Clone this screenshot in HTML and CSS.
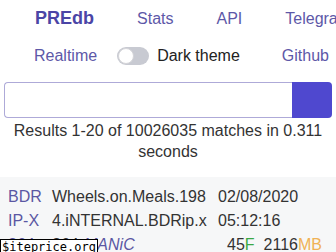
FILE: index.html
```html
<!DOCTYPE html>
<html lang="en">
<head>
<meta charset="utf-8">
<title>PREdb</title>
<link rel="stylesheet" href="styles.css">
</head>
<body>
<nav class="nav">
  <div class="nav-row nav-row-top">
    <a class="brand" href="#">PREdb</a>
    <a class="nav-link" href="#">Stats</a>
    <a class="nav-link" href="#">API</a>
    <a class="nav-link" href="#">Telegram</a>
  </div>
  <div class="nav-row nav-row-bottom">
    <a class="nav-link" href="#">Realtime</a>
    <label class="theme-switch">
      <span class="switch"><span class="knob"></span></span>
      <span class="switch-label">Dark theme</span>
    </label>
    <a class="nav-link github" href="#">Github</a>
  </div>
</nav>

<form class="search">
  <input class="search-input" type="text" aria-label="Search">
  <button class="search-btn" type="button" aria-label="Search"></button>
</form>

<p class="results">Results 1-20 of 10026035 matches in 0.311 seconds</p>

<div class="table">
  <div class="row">
    <a class="cat" href="#">BDRIP-X264</a>
    <div class="name">Wheels.on.Meals.1984.iNTERNAL.BDRip.x264<a class="group" href="#">-MANiC</a></div>
    <div class="meta">
      <div class="date">02/08/2020 05:12:16</div>
      <div class="size"><span>45<span class="files">F</span></span><span class="mbsize">2116<span class="mb">MB</span></span></div>
    </div>
  </div>
</div>

<div class="watermark">$iteprice.org</div>
</body>
</html>
```

FILE: styles.css
```css
html, body {
  margin: 0;
  padding: 0;
}

body {
  width: 336px;
  height: 252px;
  overflow: hidden;
  background: #ffffff;
  color: #333333;
  font-family: "Liberation Sans", Arial, sans-serif;
  font-size: 16px;
  line-height: 21px;
  position: relative;
}

a {
  text-decoration: none;
}

.nav {
  padding-top: 8px;
  display: flex;
  flex-direction: column;
  gap: 16px;
  white-space: nowrap;
}

.nav-row {
  display: flex;
  align-items: center;
  height: 21px;
}

.nav-row-top {
  padding-left: 35px;
  gap: 43px;
  align-items: baseline;
}

.nav-row-bottom {
  padding-left: 34px;
}

.brand {
  color: #4b45a6;
  font-weight: bold;
  font-size: 18px;
}

.nav-link {
  color: #5d58a8;
}

.theme-switch {
  display: flex;
  align-items: center;
  gap: 8px;
  margin-left: 20px;
  color: #222222;
}

.switch {
  width: 32px;
  height: 18px;
  border-radius: 9px;
  background: #c8cad2;
  display: flex;
  align-items: center;
  padding: 0 1px;
  box-sizing: border-box;
}

.knob {
  width: 16px;
  height: 16px;
  border-radius: 50%;
  background: #ffffff;
  box-sizing: border-box;
  border: 1px solid #d4d4d8;
}

.github {
  margin-left: 42px;
}

.search {
  display: flex;
  margin: 16px 4px 0 4px;
  height: 36px;
}

.search-input {
  flex: 1;
  margin: 0;
  box-sizing: border-box;
  height: 36px;
  border: 1px solid #aeaad8;
  border-right: none;
  border-radius: 4px 0 0 4px;
  background: #ffffff;
  outline: none;
}

.search-btn {
  width: 40px;
  height: 36px;
  margin: 0;
  border: none;
  border-radius: 0 4px 4px 0;
  background: #4f48cf;
}

.results {
  margin: 2px 0 0 0;
  padding: 0 8px;
  text-align: center;
  color: #333333;
}

.table {
  margin-top: 15px;
  background: #f6f7f8;
  padding: 8px 0 0 8px;
  line-height: 24px;
}

.row {
  display: flex;
}

.cat {
  width: 36px;
  flex: none;
  word-break: break-all;
  color: #5b57a3;
}

.name {
  width: 156px;
  flex: none;
  margin-left: 8px;
  word-break: break-all;
  color: #333333;
}

.group {
  color: #5b57a3;
  font-style: italic;
}

.meta {
  width: 104px;
  flex: none;
  margin-left: 10px;
}

.size {
  display: flex;
  justify-content: flex-end;
  gap: 9px;
}

.files {
  color: #3aa845;
}

.mb {
  color: #f0b255;
}

.watermark {
  position: absolute;
  left: 0;
  top: 239px;
  background: #ffffff;
  border: 1px solid #000000;
  color: #000000;
  font-family: "DejaVu Sans Mono", monospace;
  font-size: 12px;
  line-height: 14px;
  padding: 0 1px;
}
```
